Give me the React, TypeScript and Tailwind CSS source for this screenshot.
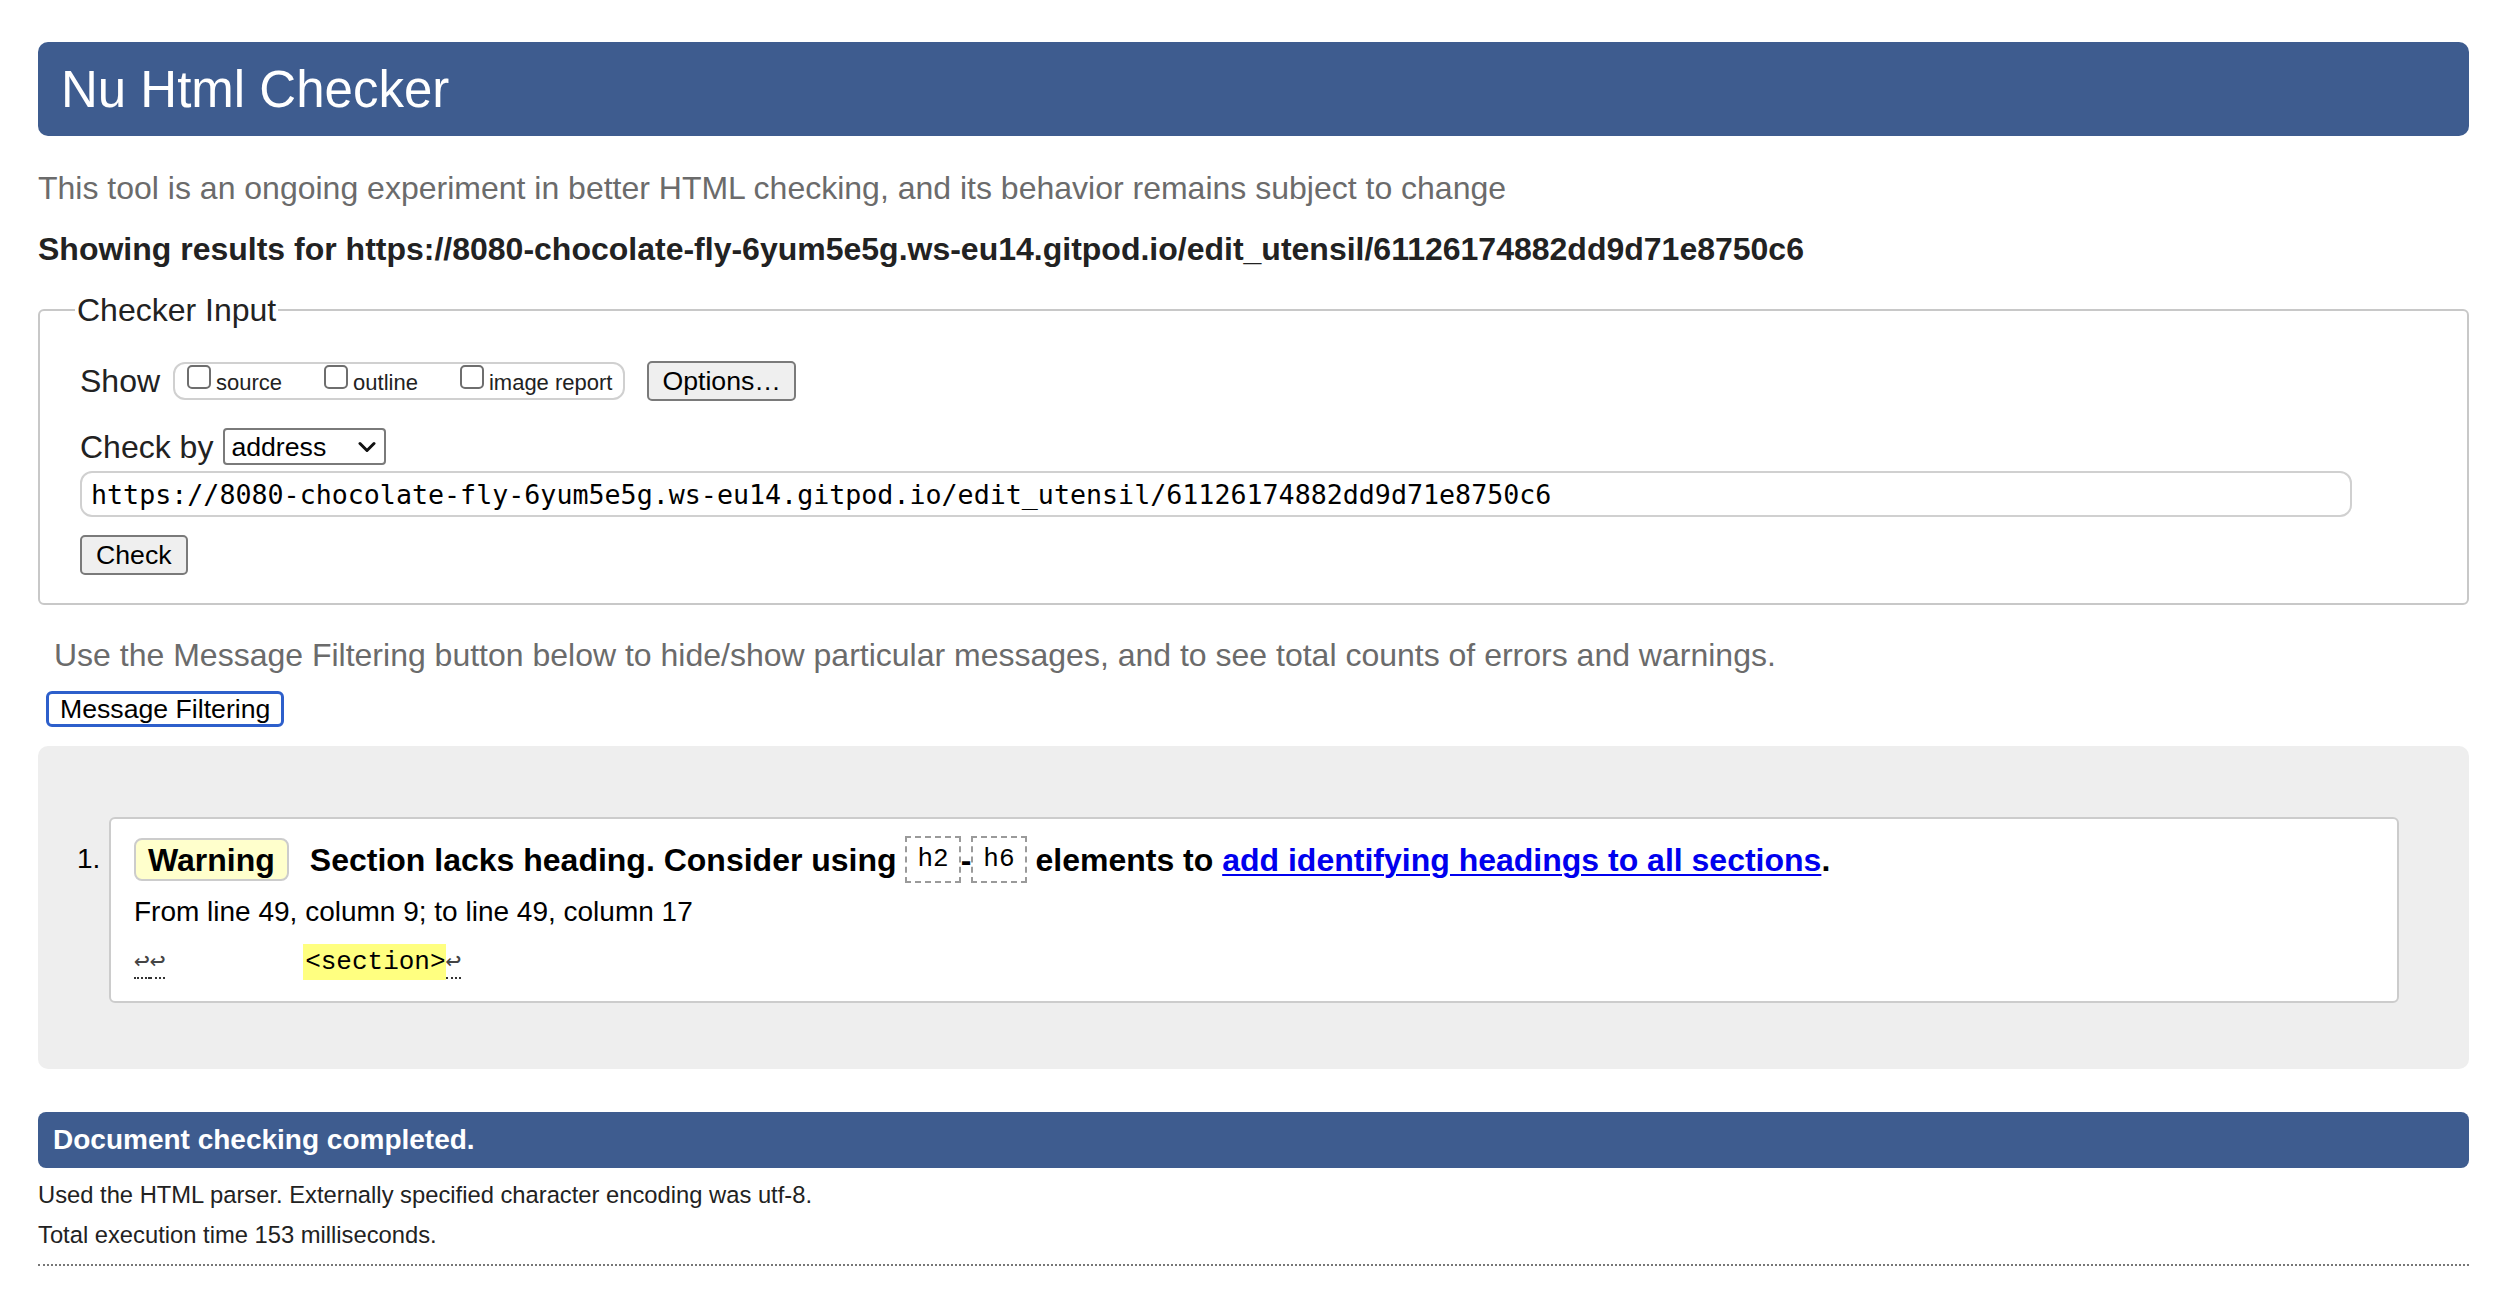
const pageUrl = 'https://8080-chocolate-fly-6yum5e5g.ws-eu14.gitpod.io/edit_utensil/61126174882dd9d71e8750c6';

function Checkbox({ label }: { label: string }) {
  return (
    <label className="flex items-center">
      <span className="mb-[8px] h-[24px] w-[24px] rounded-[5px] border-2 border-[#6e6e6e] bg-white" />
      <span className="ml-[5px] mt-[4px] text-[22px] leading-[26px] text-[#222]">{label}</span>
    </label>
  );
}

function LineFeed() {
  return <span className="border-b-2 border-dotted border-[#333] text-[#444]">↩</span>;
}

function CodeBox({ children }: { children: string }) {
  return (
    <code className="inline-flex h-[47px] items-center border-2 border-dashed border-[#9a9a9a] px-[10px] font-['Liberation_Mono',monospace] text-[26px] font-normal">
      {children}
    </code>
  );
}

export default function App() {
  return (
    <div className="min-h-screen bg-white font-['Liberation_Sans',Arial,sans-serif] text-[#222]">
      <div className="ml-[38px] w-[2431px] pb-[40px] pt-[42px]">
        <header className="flex h-[94px] items-center rounded-[10px] bg-[#3e5c8f] pl-[23px]">
          <h1 className="text-[51px] leading-none text-white">Nu Html Checker</h1>
        </header>

        <p className="mt-[34px] text-[32px] leading-[36px] text-[#6b6b6b]">
          This tool is an ongoing experiment in better HTML checking, and its behavior remains subject to change
        </p>
        <p className="mt-[25px] text-[32px] font-bold leading-[36px] text-[#222]">Showing results for {pageUrl}</p>

        <fieldset className="mt-[25px] rounded-[6px] border-2 border-[#c8c8c8] pb-[28px] pl-[40px]">
          <legend className="-ml-[5px] px-[2px] text-[32px] leading-[36px]">Checker Input</legend>

          <div className="mt-[33px] flex h-[40px] items-center">
            <span className="text-[32px] leading-[36px]">Show</span>
            <div className="ml-[13px] flex h-[38px] items-center gap-[42px] rounded-[12px] border-2 border-[#d0d0d0] pl-[12px] pr-[11px]">
              <Checkbox label="source" />
              <Checkbox label="outline" />
              <Checkbox label="image report" />
            </div>
            <button className="ml-[22px] flex h-[40px] items-center rounded-[5px] border-2 border-[#7a7a7a] bg-[#efefef] px-[13px] text-[26.67px] text-black">
              Options…
            </button>
          </div>

          <div className="mt-[27px] flex items-center">
            <span className="text-[32px] leading-[36px]">Check by</span>
            <div className="ml-[10px] flex h-[37px] w-[163px] items-center justify-between rounded-[4px] border-2 border-[#7a7a7a] pl-[6px] pr-[8px] text-[26.67px] text-black">
              <span>address</span>
              <svg width="18" height="12" viewBox="0 0 18 12" fill="none">
                <path d="M2 2.5 L9 9.5 L16 2.5" stroke="#111" strokeWidth="3" strokeLinecap="round" strokeLinejoin="round" />
              </svg>
            </div>
          </div>

          <input
            readOnly
            value={pageUrl}
            className="mt-[6px] block h-[46px] w-[2272px] rounded-[12px] border-2 border-[#d0d0d0] px-[9px] font-['DejaVu_Sans_Mono',monospace] text-[26.67px] text-black outline-none"
          />

          <button className="mt-[18px] flex h-[40px] items-center rounded-[5px] border-2 border-[#7a7a7a] bg-[#efefef] px-[14px] text-[26.67px] text-black">
            Check
          </button>
        </fieldset>

        <p className="ml-[16px] mt-[32px] text-[32px] leading-[36px] text-[#6b6b6b]">
          Use the Message Filtering button below to hide/show particular messages, and to see total counts of errors and warnings.
        </p>
        <button className="ml-[8px] mt-[18px] flex h-[36px] items-center rounded-[6px] border-[3px] border-[#2d5fcb] bg-white px-[11px] text-[26.67px] text-black">
          Message Filtering
        </button>

        <section className="mt-[19px] rounded-[10px] bg-[#eeeeee] pb-[66px] pt-[71px]">
          <ol className="flex">
            <span className="w-[71px] pl-[39px] pt-[25px] text-[28px] leading-[34px] text-black">1.</span>
            <li className="mr-[70px] flex-1 rounded-[6px] border-2 border-[#cccccc] bg-white pb-[22px] pl-[23px] pt-[17px]">
              <div className="flex h-[47px] items-center whitespace-pre text-[32px] font-bold text-black">
                <span className="flex h-[43px] items-center rounded-[8px] border-2 border-[#cccccc] bg-[#ffffcc] px-[12px]">Warning</span>
                <span className="ml-[21px]">Section lacks heading. Consider using </span>
                <CodeBox>h2</CodeBox>
                <span>-</span>
                <CodeBox>h6</CodeBox>
                <span> elements to </span>
                <a href="#" className="text-[#0000ee] underline decoration-2 underline-offset-[3px]">
                  add identifying headings to all sections
                </a>
                <span>.</span>
              </div>
              <p className="mt-[12px] text-[28px] leading-[34px] text-black">From line 49, column 9; to line 49, column 17</p>
              <p className="mt-[16px] whitespace-pre font-['Liberation_Mono','DejaVu_Sans_Mono',monospace] text-[26px] leading-[34px] text-black">
                <LineFeed />
                <LineFeed />
                {'        '}
                <mark className="ml-[13px] bg-[#ffff80] py-[3px] pl-[2px] text-black">{'<section>'}</mark>
                <LineFeed />
              </p>
            </li>
          </ol>
        </section>

        <div className="mt-[43px] flex h-[56px] items-center rounded-[8px] bg-[#3e5c8f] pl-[15px] text-[28px] font-bold text-white">
          Document checking completed.
        </div>
        <p className="mt-[13px] text-[23.75px] leading-[28px] text-[#222]">
          Used the HTML parser. Externally specified character encoding was utf-8.
        </p>
        <p className="mt-[12px] text-[23.75px] leading-[28px] text-[#222]">Total execution time 153 milliseconds.</p>
        <div className="mt-[15px] border-t-2 border-dotted border-[#777]" />
      </div>
    </div>
  );
}
